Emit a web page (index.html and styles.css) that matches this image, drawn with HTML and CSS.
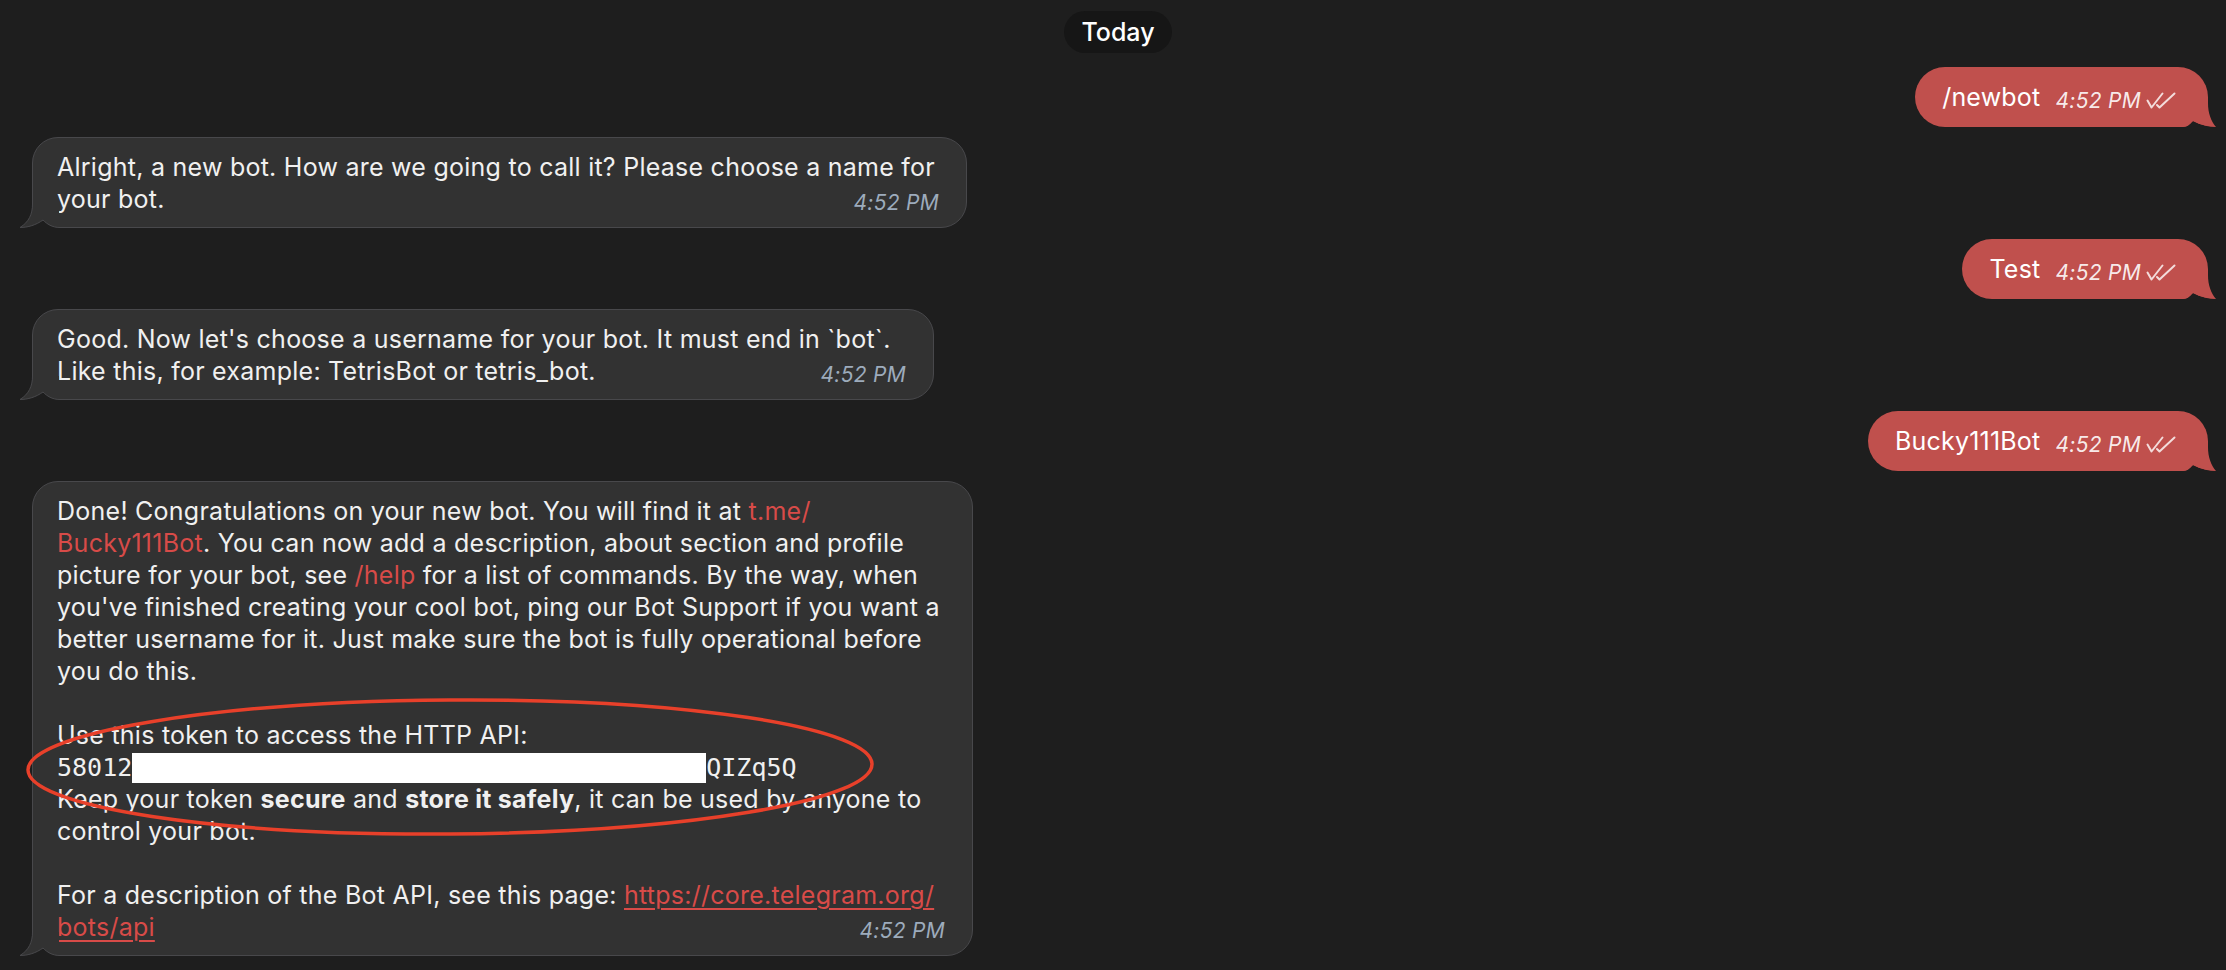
FILE: index.html
```html
<!DOCTYPE html>
<html lang="en">
<head>
<meta charset="utf-8">
<title>Chat</title>
<link rel="stylesheet" href="styles.css">
</head>
<body>
<div class="chat">
  <div class="date-row"><span class="date-pill">Today</span></div>

  <div class="msg msg-out">
    <div class="bubble-out">
      <span class="out-text">/newbot</span>
      <span class="out-time">4:52 PM</span>
      <svg class="checks" viewBox="0 0 30 17" width="30" height="17"><path d="M1.5 8.5 L5.5 15.5 L16.5 1.5 M11 13 L13.5 15.5 L28.5 1.5"/></svg>
      <svg class="tail-out" viewBox="0 0 34 24" width="34" height="24"><path class="t-cover" d="M33 24 C26 24 18 22 10 18 C7 21 4 24 0 24 Z"/><path class="t-fill-out" d="M25 0 C25 10 28 18 33 24 C26 24 18 22 10 18 C7 21 4 24 0 24 L0 0 Z"/></svg>
    </div>
  </div>

  <div class="msg msg-in">
    <div class="bubble-in bubble-w1">
      <div class="in-body">Alright, a new bot. How are we going to call it? Please choose a name for</div>
      <div class="last-line"><span>your bot.</span><span class="in-time">4:52 PM</span></div>
      <svg class="tail-in" viewBox="0 0 41 24" width="41" height="24"><path class="t-cover" d="M1 23.5 C9 23.5 17 21 24 16 C28 20 33 23.5 40 23.5 L40 24 L1 24 Z"/><path class="t-fill-in" d="M13.5 0 C13.5 10 10 18 1 23.5 C9 23.5 17 21 24 16 C28 20 33 23.5 40 23.5 L40 0 Z"/><path class="t-stroke-in" d="M13.5 0 C13.5 10 10 18 1 23.5 C9 23.5 17 21 24 16 C28 20 33 23.5 41 23.5"/></svg>
    </div>
  </div>

  <div class="msg msg-out">
    <div class="bubble-out">
      <span class="out-text">Test</span>
      <span class="out-time">4:52 PM</span>
      <svg class="checks" viewBox="0 0 30 17" width="30" height="17"><path d="M1.5 8.5 L5.5 15.5 L16.5 1.5 M11 13 L13.5 15.5 L28.5 1.5"/></svg>
      <svg class="tail-out" viewBox="0 0 34 24" width="34" height="24"><path class="t-cover" d="M33 24 C26 24 18 22 10 18 C7 21 4 24 0 24 Z"/><path class="t-fill-out" d="M25 0 C25 10 28 18 33 24 C26 24 18 22 10 18 C7 21 4 24 0 24 L0 0 Z"/></svg>
    </div>
  </div>

  <div class="msg msg-in">
    <div class="bubble-in bubble-w2">
      <div class="in-body">Good. Now let's choose a username for your bot. It must end in `bot`.</div>
      <div class="last-line"><span>Like this, for example: TetrisBot or tetris_bot.</span><span class="in-time">4:52 PM</span></div>
      <svg class="tail-in" viewBox="0 0 41 24" width="41" height="24"><path class="t-cover" d="M1 23.5 C9 23.5 17 21 24 16 C28 20 33 23.5 40 23.5 L40 24 L1 24 Z"/><path class="t-fill-in" d="M13.5 0 C13.5 10 10 18 1 23.5 C9 23.5 17 21 24 16 C28 20 33 23.5 40 23.5 L40 0 Z"/><path class="t-stroke-in" d="M13.5 0 C13.5 10 10 18 1 23.5 C9 23.5 17 21 24 16 C28 20 33 23.5 41 23.5"/></svg>
    </div>
  </div>

  <div class="msg msg-out">
    <div class="bubble-out">
      <span class="out-text">Bucky111Bot</span>
      <span class="out-time">4:52 PM</span>
      <svg class="checks" viewBox="0 0 30 17" width="30" height="17"><path d="M1.5 8.5 L5.5 15.5 L16.5 1.5 M11 13 L13.5 15.5 L28.5 1.5"/></svg>
      <svg class="tail-out" viewBox="0 0 34 24" width="34" height="24"><path class="t-cover" d="M33 24 C26 24 18 22 10 18 C7 21 4 24 0 24 Z"/><path class="t-fill-out" d="M25 0 C25 10 28 18 33 24 C26 24 18 22 10 18 C7 21 4 24 0 24 L0 0 Z"/></svg>
    </div>
  </div>

  <div class="msg msg-in">
    <div class="bubble-in bubble-w3">
      <div class="in-body">Done! Congratulations on your new bot. You will find it at <span class="link">t.me/</span><br><span class="link">Bucky111Bot</span>. You can now add a description, about section and profile<br>picture for your bot, see <span class="link">/help</span> for a list of commands. By the way, when<br>you've finished creating your cool bot, ping our Bot Support if you want a<br>better username for it. Just make sure the bot is fully operational before<br>you do this.<br><br>Use this token to access the HTTP API:<br><span class="mono">58012<span class="redact"></span>QIZq5Q</span><br>Keep your token <b class="strong">secure</b> and <b class="strong">store it safely</b>, it can be used by anyone to<br>control your bot.<br><br>For a description of the Bot API, see this page: <span class="link link-u">https://core.telegram.org/</span></div>
      <div class="last-line"><span class="link link-u">bots/api</span><span class="in-time">4:52 PM</span></div>
      <svg class="tail-in" viewBox="0 0 41 24" width="41" height="24"><path class="t-cover" d="M1 23.5 C9 23.5 17 21 24 16 C28 20 33 23.5 40 23.5 L40 24 L1 24 Z"/><path class="t-fill-in" d="M13.5 0 C13.5 10 10 18 1 23.5 C9 23.5 17 21 24 16 C28 20 33 23.5 40 23.5 L40 0 Z"/><path class="t-stroke-in" d="M13.5 0 C13.5 10 10 18 1 23.5 C9 23.5 17 21 24 16 C28 20 33 23.5 41 23.5"/></svg>
      <svg class="annotation" viewBox="0 0 860 150" width="860" height="150"><ellipse cx="426" cy="74" rx="422" ry="67" transform="rotate(-0.4 426 74)"/></svg>
    </div>
  </div>
</div>
</body>
</html>
```
FILE: styles.css
```css
html, body {
  margin: 0;
  padding: 0;
  background: #1e1e1e;
}

body {
  font-family: Inter, "Noto Sans", sans-serif;
  color: #f0f0f0;
  overflow: hidden;
}

.chat {
  display: flex;
  flex-direction: column;
  gap: 10.4px;
  padding: 11px 18px 0 32px;
}

.date-row {
  align-self: center;
  margin-left: -4px;
  margin-bottom: 3.6px;
}

.date-pill {
  display: block;
  height: 42px;
  padding: 0 17px;
  line-height: 42px;
  border-radius: 21px;
  background: #161616;
  color: #ffffff;
  font-size: 25px;
  font-weight: 500;
}

.msg-out {
  align-self: flex-end;
}

.msg-in {
  align-self: flex-start;
}

/* outgoing */
.bubble-out {
  position: relative;
  display: flex;
  align-items: flex-end;
  box-sizing: border-box;
  height: 60px;
  padding: 14px 32px 14px 27px;
  background: #c0504d;
  border-radius: 30px 30px 0 30px;
  color: #ffffff;
  font-size: 25px;
  line-height: 32px;
  letter-spacing: 0.2px;
  white-space: nowrap;
}

.out-time {
  margin-left: 15px;
  margin-bottom: 2px;
  font-size: 21px;
  line-height: 21px;
  font-style: italic;
  letter-spacing: 0.3px;
  color: rgba(255, 255, 255, 0.9);
}

.checks {
  margin-left: 5px;
  margin-bottom: 4px;
  fill: none;
  stroke: rgba(255, 255, 255, 0.8);
  stroke-width: 2;
  stroke-linecap: round;
  stroke-linejoin: round;
}

.tail-out {
  position: absolute;
  right: -9px;
  bottom: 0;
}

.t-cover {
  fill: #1e1e1e;
}

.t-fill-out {
  fill: #c0504d;
}

/* incoming */
.bubble-in {
  position: relative;
  box-sizing: border-box;
  padding: 13px 27px 12px 24px;
  background: #323232;
  border: 1px solid #48484b;
  border-radius: 26px 26px 26px 0;
  font-size: 25px;
  line-height: 32px;
  letter-spacing: 0.25px;
  white-space: nowrap;
}

.bubble-w1 { width: 935px; }
.bubble-w2 { width: 902px; }
.bubble-w3 { width: 941px; }

.last-line {
  display: flex;
  justify-content: space-between;
  align-items: flex-end;
}

.in-time {
  margin-bottom: 2px;
  font-size: 21px;
  line-height: 21px;
  font-style: italic;
  letter-spacing: 0.3px;
  color: #9dabbc;
}

.tail-in {
  position: absolute;
  left: -14px;
  bottom: -1px;
}

.t-fill-in {
  fill: #323232;
}

.t-stroke-in {
  fill: none;
  stroke: #48484b;
  stroke-width: 1;
}

.link {
  color: #d84b48;
}

.link-u {
  text-decoration: underline;
  text-decoration-thickness: 1.5px;
  text-underline-offset: 4px;
}

.strong {
  font-weight: 700;
}

.mono {
  font-family: "DejaVu Sans Mono", "Liberation Mono", monospace;
  letter-spacing: 0;
  line-height: 30px;
}

.redact {
  display: inline-block;
  width: 574px;
  height: 30px;
  background: #ffffff;
  vertical-align: -7px;
}

.annotation {
  position: absolute;
  left: -9px;
  top: 211px;
  overflow: visible;
  pointer-events: none;
}

.annotation ellipse {
  fill: none;
  stroke: #e8402a;
  stroke-width: 3.5;
}
```
